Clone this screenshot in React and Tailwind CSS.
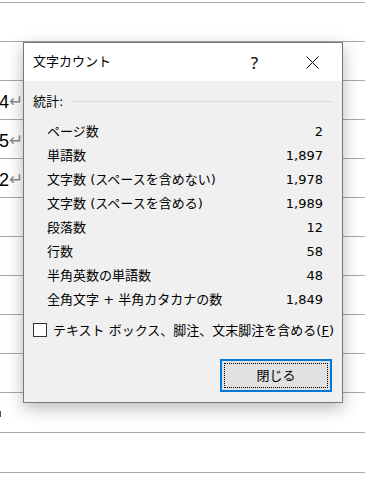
import React from "react";

const rowHeights = [39, 39, 39, 39, 39, 39, 39, 39, 39, 39, 40, 40, 15];
const pageMarks = { 2: "4", 3: "5", 4: "2" };

const stats = [
    ["ページ数", "2"],
    ["単語数", "1,897"],
    ["文字数 (スペースを含めない)", "1,978"],
    ["文字数 (スペースを含める)", "1,989"],
    ["段落数", "12"],
    ["行数", "58"],
    ["半角英数の単語数", "48"],
    ["全角文字 + 半角カタカナの数", "1,849"],
];

const PageBackground = () => {
    return (
        <div className="pt-[2px]">
            {rowHeights.map((h, i) => (
                <div
                    key={i}
                    className="flex items-center border-t border-[#a8a8a8]"
                    style={{ height: h }}
                >
                    {pageMarks[i] && (
                        <div className="-ml-[1px] flex items-center pt-[3px] leading-none font-['Liberation_Sans','Noto_Sans_CJK_JP',sans-serif]">
                            <span className="text-[18px] text-black">{pageMarks[i]}</span>
                            <span className="text-[17px] text-[#8a8a8a]">↵</span>
                        </div>
                    )}
                    {i === 10 && <div className="mt-[3px] h-[6px] w-[1px] bg-[#555]" />}
                </div>
            ))}
        </div>
    );
};

const WordCountDialog = () => {
    return (
        <div className="absolute left-[23px] top-[42px] flex h-[361px] w-[320px] flex-col border border-[#777] bg-[#f0f0f0] text-[13px] text-black shadow-[0_5px_16px_rgba(0,0,0,0.28)] font-['DejaVu_Sans','Noto_Sans_CJK_JP',sans-serif]">
            {/* title bar */}
            <div className="flex h-[38px] items-center bg-white">
                <div className="flex-1 pl-[9px] pb-[1px] leading-none">文字カウント</div>
                <div className="flex w-[55px] justify-center text-[17px] leading-none font-['Noto_Sans',sans-serif]">?</div>
                <div className="flex w-[60px] justify-center">
                    <svg width="13" height="13" viewBox="0 0 13 13">
                        <path d="M0.5 0.5 L12.5 12.5 M12.5 0.5 L0.5 12.5" stroke="#000" strokeWidth="1" fill="none" />
                    </svg>
                </div>
            </div>

            {/* body */}
            <div className="flex flex-1 flex-col pt-[8px]">
                <div className="flex h-[24px] items-center pl-[9px] pr-[9px]">
                    <span className="leading-none">統計:</span>
                    <div className="ml-[8px] flex-1 border-t border-[#dadada]" />
                </div>

                <div className="mt-[6px] flex flex-col">
                    {stats.map(([label, value]) => (
                        <div key={label} className="flex h-[24px] items-center justify-between pl-[23px] pr-[19px]">
                            <span className="leading-none">{label}</span>
                            <span className="leading-none">{value}</span>
                        </div>
                    ))}
                </div>

                <div className="mt-[7px] flex h-[24px] items-center pl-[9px]">
                    <div className="h-[14px] w-[14px] border border-[#333] bg-white" />
                    <span className="ml-[6px] leading-none">
                        テキスト ボックス、脚注、文末脚注を含める(<span className="underline">F</span>)
                    </span>
                </div>

                <div className="mt-[17px] flex justify-end pr-[10px]">
                    <button className="flex h-[33px] w-[112px] items-center justify-center border-2 border-[#0078d7] bg-[#e1e1e1] p-[2px]">
                        <div className="flex h-full w-full items-center justify-center border border-dotted border-black leading-none">
                            閉じる
                        </div>
                    </button>
                </div>
            </div>
        </div>
    );
};

const App = () => {
    return (
        <div className="relative h-[487px] w-[365px] overflow-hidden bg-white">
            <PageBackground />
            <WordCountDialog />
        </div>
    );
};

export default App;
